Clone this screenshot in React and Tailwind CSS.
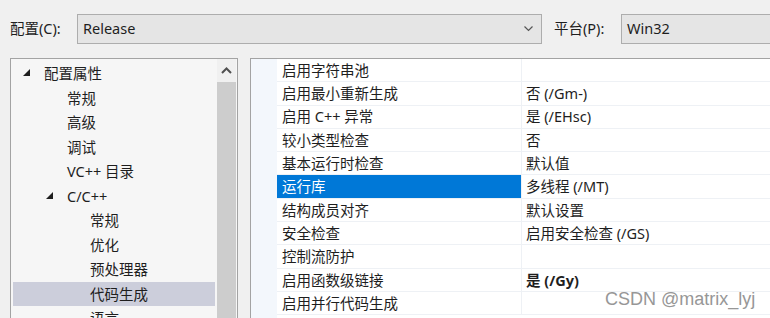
import React from 'react';

const font = { fontFamily: '"Noto Sans", "Noto Sans CJK SC", sans-serif' };

const treeItems = [
  { label: '配置属性', level: 0, expanded: true },
  { label: '常规', level: 1 },
  { label: '高级', level: 1 },
  { label: '调试', level: 1 },
  { label: 'VC++ 目录', level: 1 },
  { label: 'C/C++', level: 1, expanded: true },
  { label: '常规', level: 2 },
  { label: '优化', level: 2 },
  { label: '预处理器', level: 2 },
  { label: '代码生成', level: 2, selected: true },
  { label: '语言', level: 2 },
];

const props = [
  { name: '启用字符串池', value: '' },
  { name: '启用最小重新生成', value: '否 (/Gm-)' },
  { name: '启用 C++ 异常', value: '是 (/EHsc)' },
  { name: '较小类型检查', value: '否' },
  { name: '基本运行时检查', value: '默认值' },
  { name: '运行库', value: '多线程 (/MT)', selected: true },
  { name: '结构成员对齐', value: '默认设置' },
  { name: '安全检查', value: '启用安全检查 (/GS)' },
  { name: '控制流防护', value: '' },
  { name: '启用函数级链接', value: '是 (/Gy)', bold: true },
  { name: '启用并行代码生成', value: '' },
];

const Triangle = () => (
  <svg width="7" height="7" viewBox="0 0 7 7" className="shrink-0">
    <polygon points="7,0 7,7 0,7" fill="#1e1e1e" />
  </svg>
);

const indent = ['pl-[31px]', 'pl-[54px]', 'pl-[77px]'];

const TreeView = () => (
  <div className="relative w-[228px] shrink-0 h-[270px] border border-[#a3a3a3] bg-[#f6f6f6] flex overflow-hidden">
    <div className="flex-1 px-[2px] pt-[2px]">
      {treeItems.map((item, i) => (
        <div
          key={i}
          className={`relative h-[24.5px] flex items-center ${indent[item.level]} ${item.selected ? 'bg-[#cccedb]' : ''}`}
        >
          {item.expanded && (
            <span className="absolute top-[8px]" style={{ left: item.level === 0 ? 10 : 33 }}>
              <Triangle />
            </span>
          )}
          <span className="text-[14.5px] text-[#1e1e1e] leading-none">{item.label}</span>
        </div>
      ))}
    </div>
    <div className="w-[19px] mr-[1px] flex flex-col bg-[#f0f0f0]">
      <div className="h-[23px] flex items-center justify-center">
        <svg width="11" height="7" viewBox="0 0 11 7">
          <polyline points="1,6 5.5,1.5 10,6" fill="none" stroke="#505050" strokeWidth="2" />
        </svg>
      </div>
      <div className="flex-1 bg-[#cdcdcd]" />
    </div>
  </div>
);

const PropertyGrid = () => (
  <div className="flex-1 h-[270px] border-l border-t border-[#a3a3a3] bg-white flex overflow-hidden">
    <div className="w-[26px] shrink-0 bg-[#f3f7fc]" />
    <div className="flex-1">
      {props.map((p, i) => (
        <div key={i} className="h-[23.3px] flex border-b border-[#eef1f5]">
          <div
            className={`w-[245px] shrink-0 flex items-center pl-[5px] border-r border-[#eef1f5] ${p.selected ? 'bg-[#0078d7] text-white' : 'text-[#1e1e1e]'}`}
          >
            <span className="text-[14.5px] leading-none">{p.name}</span>
          </div>
          <div className="flex-1 flex items-center pl-[4px] text-[#1e1e1e]">
            <span className={`text-[14.5px] leading-none whitespace-nowrap ${p.bold ? 'font-bold' : ''}`}>{p.value}</span>
          </div>
        </div>
      ))}
    </div>
  </div>
);

export default function App() {
  return (
    <div className="relative w-[770px] h-[318px] overflow-hidden bg-[#f0f0f0]" style={font}>
      <div className="flex items-center pt-[14px] pl-[10px] h-[44px]">
        <span className="w-[67px] shrink-0 text-[14.5px] text-[#1e1e1e]">配置(C):</span>
        <div className="w-[465px] shrink-0 h-[30px] border border-[#adadad] bg-[#e5e5e5] flex items-center justify-between pl-[5px] pr-[8px]">
          <span className="text-[14.5px] text-[#1e1e1e]">Release</span>
          <svg width="9" height="6" viewBox="0 0 9 6">
            <polyline points="0.5,0.5 4.5,4.5 8.5,0.5" fill="none" stroke="#555" strokeWidth="1.2" />
          </svg>
        </div>
        <span className="ml-[12px] w-[67px] shrink-0 text-[14.5px] text-[#1e1e1e]">平台(P):</span>
        <div className="w-[170px] h-[30px] border border-[#adadad] bg-[#e5e5e5] flex items-center pl-[5px] shrink-0">
          <span className="text-[14.5px] text-[#1e1e1e]">Win32</span>
        </div>
      </div>
      <div className="flex mt-[14px] pl-[10px]">
        <TreeView />
        <div className="w-[12px] shrink-0" />
        <PropertyGrid />
      </div>
      <div
        className="absolute left-[605px] top-[286px] text-[18px] text-[#8c8c8c] opacity-90 whitespace-nowrap"
        style={{ fontFamily: '"Liberation Sans", "Noto Sans CJK SC", sans-serif' }}
      >
        CSDN @matrix_lyj
      </div>
    </div>
  );
}
